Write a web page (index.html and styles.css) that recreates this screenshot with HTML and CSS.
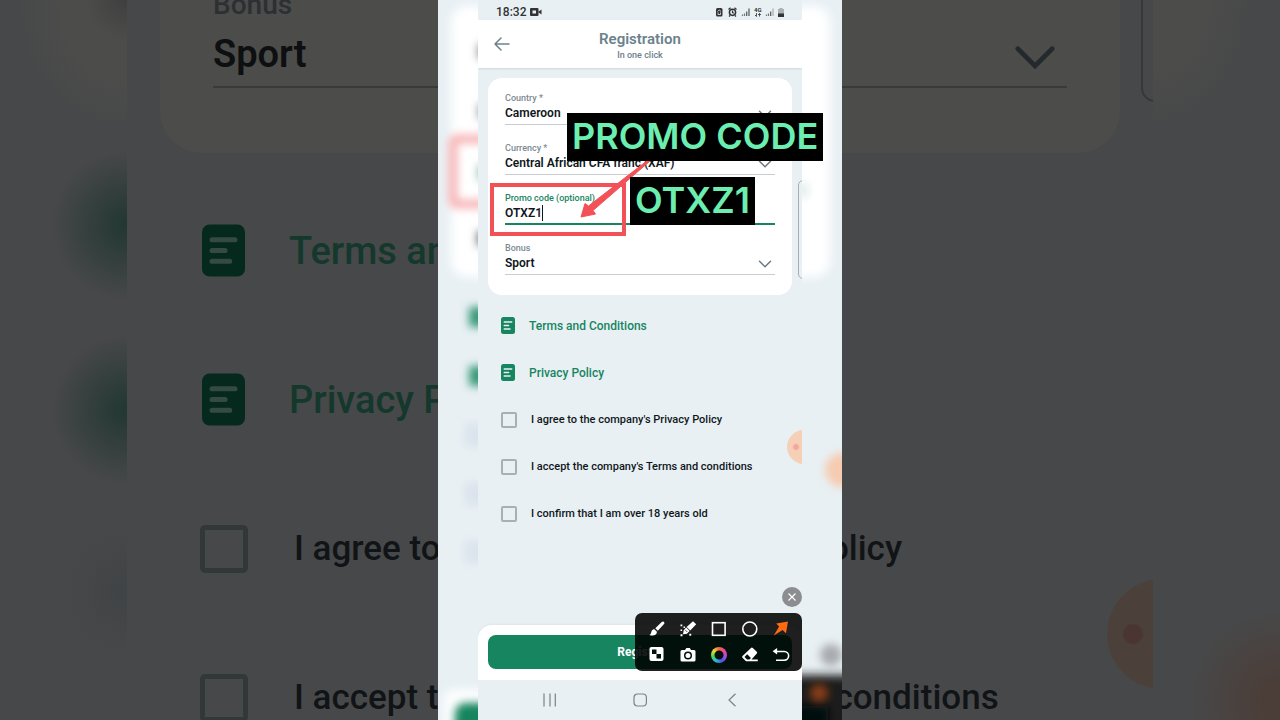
FILE: index.html
```
<!DOCTYPE html>
<html lang="en">
  <head>
    <meta charset="UTF-8" />
    <meta name="viewport" content="width=device-width, initial-scale=1.0" />
    <title>Registration</title>
    <link rel="stylesheet" href="styles.css" />
  </head>
  <body>
    <svg class="sprite" aria-hidden="true">
      <symbol id="doc" viewBox="0 0 14 17">
        <rect width="14" height="17" rx="2.5" fill="#17855f" />
        <path d="M3.3 5h7.4M3.3 8.500h4.200M3.300 12h5.700" stroke="#e8f0f4" stroke-width="1.600" stroke-linecap="round" />
      </symbol>
      <symbol id="doc-dark" viewBox="0 0 14 17">
        <rect width="14" height="17" rx="2.5" fill="#05291d" />
        <path d="M3.3 5h7.4M3.3 8.500h4.200M3.300 12h5.700" stroke="#354a43" stroke-width="1.700" stroke-linecap="round" />
      </symbol>
      <symbol id="chevron" viewBox="0 0 14 8">
        <path d="M1.500 1.200L7 6.700l5.500-5.500" fill="none" stroke="currentColor" stroke-width="1.500" stroke-linecap="round" />
      </symbol>
    </svg>

    <div class="stage">
      <!-- Enlarged, dimmed copy behind the phone -->
      <div class="backdrop">
        <div class="edge edge-left"></div>
        <div class="zoomed">
          <div class="zoomed-card">
            <div class="zoomed-label">Bonus</div>
            <div class="zoomed-value">Sport</div>
            <svg class="zoomed-chevron"><use href="#chevron" /></svg>
          </div>
          <div class="zoomed-list">
            <a class="zoomed-row zoomed-link" href="#terms"><svg><use href="#doc-dark" /></svg>Terms and Conditions</a>
            <a class="zoomed-row zoomed-link" href="#privacy"><svg><use href="#doc-dark" /></svg>Privacy Policy</a>
            <label class="zoomed-row"><input type="checkbox" />I agree to the company's Privacy Policy</label>
            <label class="zoomed-row"><input type="checkbox" />I accept the company's Terms and conditions</label>
          </div>
          <div class="zoomed-box"></div>
          <div class="zoomed-bubble"></div>
        </div>
        <div class="edge edge-right"></div>
      </div>

      <div class="frame">
        <svg class="glow" viewBox="0 0 404 720" width="404" height="720" aria-hidden="true">
          <defs>
            <filter id="soft" x="-50%" y="-50%" width="200%" height="200%"><feGaussianBlur stdDeviation="5" /></filter>
            <filter id="soft-sm" x="-50%" y="-50%" width="200%" height="200%"><feGaussianBlur stdDeviation="4" /></filter>
          </defs>
          <rect x="13" y="6" width="379" height="271" rx="16" fill="#fff" filter="url(#soft)" />
          <rect x="15" y="139" width="90" height="65" rx="3" fill="none" stroke="#f8b4b6" stroke-width="9" filter="url(#soft-sm)" />
          <g filter="url(#soft-sm)">
            <rect x="40" y="44" width="20" height="15" fill="#888" />
            <rect x="40" y="104" width="20" height="15" fill="#999fa3" />
            <rect x="40" y="165" width="20" height="15" fill="#8dbcab" />
            <rect x="39" y="231" width="20" height="15" fill="#777" />
            <rect x="31" y="307" width="24" height="20" fill="#3a9a79" />
            <rect x="31" y="366" width="24" height="20" fill="#3a9a79" />
            <rect x="27" y="424" width="24" height="22" fill="#dbe3ec" />
            <rect x="27" y="483" width="24" height="22" fill="#dbe3ec" />
            <rect x="27" y="541" width="24" height="22" fill="#dbe3ec" />
            <rect x="360" y="183" width="10" height="14" fill="#e0eaea" />
            <circle cx="404" cy="470" r="17" fill="#f6cbb0" />
            <circle cx="393" cy="655" r="11" fill="#a9abae" />
          </g>
          <rect x="6" y="690" width="70" height="50" rx="10" fill="#fff" filter="url(#soft)" />
          <rect x="17" y="703" width="60" height="40" rx="10" fill="#17855f" filter="url(#soft-sm)" />
          <rect x="340" y="675" width="90" height="70" fill="#1c1e1e" filter="url(#soft)" />
          <rect x="340" y="706" width="50" height="30" fill="#02110b" filter="url(#soft-sm)" />
          <circle cx="381" cy="693" r="9" fill="#8a3e12" filter="url(#soft-sm)" />
        </svg>

        <main class="phone">
          <div class="status-bar">
            <span class="clock">18:32</span>
            <svg width="12" height="8" viewBox="0 0 12 8">
              <rect width="8.500" height="8" rx="1" fill="#333" />
              <path d="M8 4l3.500-2.500v5z" fill="#333" />
              <rect x="2.500" y="2.500" width="3.500" height="3" fill="#e8f0f4" />
            </svg>
            <svg class="status-icons" width="70" height="12" viewBox="0 0 70 12">
              <rect x="0" y="2" width="6.500" height="8.500" rx="1.500" fill="#333" />
              <path d="M1.500 5.500L3.300 4l1.800 1.500M2 6.500v2h2.500v-2" fill="none" stroke="#e8f0f4" stroke-width=".8" />
              <circle cx="16.500" cy="6.300" r="3.100" fill="#e8f0f4" stroke="#333" stroke-width="1.500" />
              <path d="M12.500 3.500l2-1.700M20.500 3.500l-2-1.700M16.500 4.600v2l1.300.7M14 9.500l-1 1M19 9.500l1 1" fill="none" stroke="#333" stroke-width="1.200" />
              <path d="M26.500 10V8.500M28.500 10V7.500" stroke="#777" stroke-width="1.200" />
              <path d="M30.700 10V5.500M33 10V2.500" stroke="#555" stroke-width="1.200" />
              <text x="38" y="5.500" class="net">4G</text>
              <path d="M40.500 7v3.500m-1.500-1.500l1.500 1.500M43.500 10.500V7m-1.500 1.500h3" stroke="#444" fill="none" stroke-width=".9" />
              <path d="M50.500 10V8.500M52.500 10V7.500" stroke="#777" stroke-width="1.200" />
              <path d="M54.700 10V5.500" stroke="#555" stroke-width="1.200" />
              <path d="M57 10V2.500" stroke="#aaa" stroke-width="1.200" />
              <path d="M62 3h1.500V2h3v1H68v8h-6z" fill="#aab0b3" />
              <path d="M62 7.500h6V11h-6z" fill="#333" />
            </svg>
          </div>

          <header class="top-bar">
            <button class="back" aria-label="Back">
              <svg width="16" height="14" viewBox="0 0 16 14" fill="none" stroke="#6b828d" stroke-width="1.500" stroke-linecap="round" stroke-linejoin="round">
                <path d="M7 1L1 7l6 6M1 7h14" />
              </svg>
            </button>
            <h1>Registration</h1>
            <p>In one click</p>
          </header>

          <form class="form" id="form">
            <div class="card">
              <div class="field">
                <label for="country">Country *</label>
                <select id="country"><option>Cameroon</option></select>
                <svg class="chevron"><use href="#chevron" /></svg>
              </div>
              <div class="field">
                <label for="currency">Currency *</label>
                <select id="currency"><option>Central African CFA franc (XAF)</option></select>
                <svg class="chevron"><use href="#chevron" /></svg>
              </div>
              <div class="field active">
                <label for="promo">Promo code (optional)</label>
                <input type="text" id="promo" value="OTXZ1" />
                <span class="caret"></span>
              </div>
              <div class="field">
                <label for="bonus">Bonus</label>
                <select id="bonus"><option>Sport</option></select>
                <svg class="chevron"><use href="#chevron" /></svg>
              </div>
            </div>

            <div class="rows">
              <a class="row link" href="#terms"><svg><use href="#doc" /></svg>Terms and Conditions</a>
              <a class="row link" href="#privacy"><svg><use href="#doc" /></svg>Privacy Policy</a>
              <label class="row"><input type="checkbox" />I agree to the company's Privacy Policy</label>
              <label class="row"><input type="checkbox" />I accept the company's Terms and conditions</label>
              <label class="row"><input type="checkbox" />I confirm that I am over 18 years old</label>
            </div>
          </form>

          <div class="next-box"></div>
          <div class="bubble"></div>

          <footer class="submit-bar">
            <button class="register" type="submit" form="form">Register</button>
          </footer>

          <nav class="nav-bar">
            <button aria-label="Recent apps">
              <svg width="14" height="14" viewBox="0 0 14 14" stroke="#7c8387" stroke-width="1.200"><path d="M2 .5v13M8 .5v13M13.300 .5v13" /></svg>
            </button>
            <button aria-label="Home">
              <svg width="14" height="14" viewBox="0 0 14 14" fill="none" stroke="#7c8387" stroke-width="1.200"><rect x="1" y="1" width="12.400" height="12" rx="3.500" /></svg>
            </button>
            <button aria-label="Back">
              <svg width="14" height="14" viewBox="0 0 14 14" fill="none" stroke="#7c8387" stroke-width="1.200"><path d="M11.500.8L5 7l6.500 6.200" /></svg>
            </button>
          </nav>
        </main>

        <!-- Annotations drawn over the phone -->
        <div class="mark-box"></div>
        <svg class="mark-arrow" width="72" height="60" viewBox="0 0 72 60">
          <path d="M71 1L14 50.500l2.500 3.500L2 57l4-13.500 3.500 2.500L69 0z" fill="#f25257" stroke="#f25257" stroke-linejoin="round" />
        </svg>
        <div class="tag tag-title">PROMO CODE</div>
        <div class="tag tag-code">OTXZ1</div>

        <div class="tools">
          <button class="tools-close" aria-label="Close">
            <svg width="20" height="20" viewBox="0 0 20 20" stroke="#fff" stroke-width="1.200"><path d="M6.500 6.500l7 7M13.500 6.500l-7 7" /></svg>
          </button>
          <div class="tools-panel">
            <button aria-label="Brush">
              <svg viewBox="0 0 18 18" fill="#fff"><path d="M15.800 1.900c.9.800.8 1.400 0 2.300L9.800 10.800 7.300 8.300l6.400-6.200c.7-.7 1.400-.9 2.100-.2zM6.400 9.200l2.500 2.500c.3 3-3.200 4.900-7.500 3.300 1.900-.9 1.500-2.600 2.200-4.100.6-1.200 1.600-1.700 2.800-1.700z" /></svg>
            </button>
            <button aria-label="Highlighter">
              <svg viewBox="0 0 18 18" fill="#fff"><path d="M14 1.300l3.200 3-6 6.300-3.600-3.500zM7.200 7.600l3.400 3.400-2.700 2.700-3.900.6.700-4zM1.500 4.500h1.800v1.800H1.500zM4.500 6.500h1.600v1.600H4.500zM1.500 9.500h1.600v1.600H1.500zM1.500 14.300h2v2h-2zM10.300 13.800h1.900v1.900h-1.900z" /><path d="M6.600 10.300l1.500 1.500" stroke="#1e1e1e" /></svg>
            </button>
            <button aria-label="Rectangle">
              <svg viewBox="0 0 18 18" fill="none" stroke="#fff" stroke-width="1.600"><rect x="2.500" y="2.700" width="12.600" height="12.600" /></svg>
            </button>
            <button aria-label="Circle">
              <svg viewBox="0 0 18 18" fill="none" stroke="#fff" stroke-width="1.600"><circle cx="8.800" cy="9" r="7" /></svg>
            </button>
            <button aria-label="Arrow">
              <svg viewBox="0 0 18 18" fill="#ff6a13"><path d="M16 1.500L4.200 3.500l2.900 2.900L1.800 15.500l8.800-5.600 3.400 3.300z" /></svg>
            </button>
            <button aria-label="Mosaic">
              <svg viewBox="0 0 18 18"><rect x="1.500" y="1" width="14" height="14" rx="2" fill="#fff" /><path d="M4 3.500h4.500V8H4zM8.500 8H13v4.500H8.500z" fill="#02110b" /></svg>
            </button>
            <button aria-label="Screenshot">
              <svg viewBox="0 0 18 18"><path d="M3 4h3l1.400-2h3.400L12 4h3q1.500 0 1.500 1.500V14q0 1.500-1.500 1.500H3q-1.500 0-1.500-1.500V5.500Q1.500 4 3 4z" fill="#fff" /><circle cx="9" cy="9.500" r="4" fill="#02110b" /><circle cx="9" cy="9.500" r="2.500" fill="#fff" /></svg>
            </button>
            <button aria-label="Color"><span class="wheel"></span></button>
            <button aria-label="Eraser">
              <svg viewBox="0 0 18 18"><path d="M10 1.900q.9-.8 1.800 0l4 3.900q.8.900 0 1.800L10.500 13.500h6.300v1.700H5L1.500 11.700q-.8-.9 0-1.800z" fill="#fff" /><path d="M6.200 8.200L9.900 12 8.500 13.500H6L3.500 11z" fill="#02110b" /></svg>
            </button>
            <button aria-label="Undo">
              <svg viewBox="0 0 18 18"><path d="M3 5.500h9.300a4.200 4.200 0 010 8.700H4" fill="none" stroke="#fff" stroke-width="1.600" /><path d="M.6 5.300l4.500-3.300v6.600z" fill="#fff" /></svg>
            </button>
          </div>
        </div>
      </div>
    </div>
  </body>
</html>
```
FILE: styles.css
```
* {
  box-sizing: border-box;
}
body {
  font-family: Roboto, "Liberation Sans", sans-serif;
  background-color: #474849;
  color: #10171b;
  margin: 0;
}
button {
  font: inherit;
  padding: 0;
  border: none;
  background: none;
  cursor: pointer;
}
a {
  text-decoration: none;
}
svg {
  display: block;
  flex: none;
}
.sprite {
  position: absolute;
  width: 0;
  height: 0;
}
.stage {
  position: relative;
  display: flex;
  justify-content: center;
  min-height: 100vh;
  overflow: hidden;
}

/* Backdrop */
.backdrop {
  position: absolute;
  inset: 0;
  display: flex;
  overflow: hidden;
}
.edge {
  flex: 1;
}
.edge-left {
  background:
    radial-gradient(circle at 100% 225px, #243832 5px, transparent 75px),
    radial-gradient(circle at 100% 410px, #243832 5px, transparent 75px),
    radial-gradient(circle at 100% 592px, #414446 10px, transparent 65px),
    radial-gradient(circle at 100% 0, #403f3f, transparent 40px),
    radial-gradient(ellipse 110px 130px at 100% 0, #4c4c4b 60%, transparent);
}
.edge-right {
  background:
    radial-gradient(ellipse 100px 130px at 0 0, #4c4c4b 50%, transparent),
    radial-gradient(circle at 100% 700px, #4b3e39 20px, transparent 90px);
}
.zoomed {
  position: relative;
  width: 1026px;
  overflow: hidden;
  color: #111416;
}
.zoomed-card {
  position: relative;
  margin: -12px 33px 0;
  padding: 0 53px 65px;
  border-radius: 0 0 42px 42px;
  background: #4c4c4b;
}
.zoomed-label {
  font-size: 28px;
  font-weight: 500;
  line-height: 34px;
  color: #2b3033;
}
.zoomed-value {
  font-size: 38px;
  font-weight: 600;
  line-height: 64px;
  color: #0d0f10;
  border-bottom: 2px solid #383a3b;
}
.zoomed-chevron {
  position: absolute;
  top: 57px;
  right: 63px;
  width: 44px;
  height: 25px;
  color: #23292c;
}
.zoomed-list {
  margin-top: 23px;
  padding-left: 73px;
}
.zoomed-row {
  display: flex;
  align-items: center;
  gap: 46px;
  height: 149px;
  font-size: 35px;
  font-weight: 500;
}
.zoomed-row input {
  appearance: none;
  width: 48px;
  height: 48px;
  margin: 0;
  border: 5px solid #323739;
  border-radius: 5px;
}
.zoomed-link {
  gap: 44px;
  padding-left: 2px;
  font-size: 38px;
  color: #14382c;
}
.zoomed-link svg {
  width: 43px;
  height: 53px;
}
.zoomed-box {
  position: absolute;
  top: -20px;
  right: -20px;
  width: 32px;
  height: 122px;
  border: 2px solid #36393b;
  border-radius: 14px;
}
.zoomed-bubble {
  position: absolute;
  top: 579px;
  right: -64px;
  width: 110px;
  height: 110px;
  border-radius: 50%;
  background: radial-gradient(circle at 26px 55px, #4b3533 9px, #4b403a 11px);
}

/* Phone */
.frame {
  position: relative;
  width: 404px;
  padding: 0 40px;
  background: #e8f0f4;
}
.glow {
  position: absolute;
  top: 0;
  left: 0;
}
.phone {
  position: relative;
  display: flex;
  flex-direction: column;
  min-height: 100vh;
  overflow: hidden;
  background: #e8f0f4;
}
.status-bar {
  display: flex;
  align-items: center;
  gap: 4px;
  height: 20px;
  padding: 3px 16px 0 18px;
}
.clock {
  font-size: 12px;
  font-weight: 500;
  color: #333;
}
.status-icons {
  margin-left: auto;
}
.net {
  font-size: 6px;
  font-weight: 700;
  fill: #333;
}
.top-bar {
  position: relative;
  height: 48px;
  padding-top: 10px;
  text-align: center;
  background: #fff;
  box-shadow: 0 1px 2px #cfd7db;
  color: #6b828d;
}
.top-bar h1 {
  margin: 0;
  font-size: 15px;
  font-weight: 600;
  line-height: 18px;
}
.top-bar p {
  margin: 0;
  font-size: 9px;
  font-weight: 500;
  line-height: 14px;
}
.back {
  position: absolute;
  top: 17px;
  left: 16px;
}
.form {
  padding: 10px 10px 0;
}
.card {
  display: flex;
  flex-direction: column;
  gap: 17px;
  padding: 14px 17px 20px;
  border-radius: 14px;
  background: #fff;
}
.field {
  position: relative;
  height: 33px;
  border-bottom: 1px solid #c9cdcf;
}
.field label {
  display: block;
  font-size: 9px;
  font-weight: 500;
  line-height: 12px;
  color: #7b8a92;
}
.field select,
.field input {
  display: block;
  appearance: none;
  width: 100%;
  height: 18px;
  padding: 0;
  border: none;
  outline: none;
  background: none;
  font-family: inherit;
  font-size: 12px;
  font-weight: 600;
  color: #10171b;
}
.field.active {
  border-bottom: 2px solid #17855f;
}
.field.active label {
  color: #17855f;
}
.chevron {
  position: absolute;
  right: 3px;
  bottom: 6px;
  width: 14px;
  height: 8px;
  color: #6b7880;
}
.caret {
  position: absolute;
  top: 13px;
  left: 37px;
  width: 1px;
  height: 16px;
  background: #10171b;
}
.rows {
  margin-top: 7px;
  padding-left: 13px;
}
.row {
  display: flex;
  align-items: center;
  gap: 14px;
  height: 47px;
  font-size: 11px;
  font-weight: 500;
}
.row input {
  appearance: none;
  width: 16px;
  height: 16px;
  margin: 0;
  border: 2px solid #a9b0b4;
  border-radius: 2px;
}
.link {
  gap: 14px;
  font-size: 12px;
  color: #17855f;
}
.link svg {
  width: 14px;
  height: 17px;
}
.next-box {
  position: absolute;
  top: 180px;
  right: -20px;
  width: 24px;
  height: 99px;
  border: 1px solid #a4aeb4;
  border-radius: 5px;
}
.bubble {
  position: absolute;
  top: 430px;
  right: -19px;
  width: 34px;
  height: 34px;
  border-radius: 50%;
  background: radial-gradient(circle at 9px 17px, #f3a6a0 2px, #f6d0b6 4px);
}
.submit-bar {
  margin-top: auto;
  padding: 10px 10px 11px;
  border-radius: 14px 14px 0 0;
  background: #fff;
  box-shadow: 0 -1px 2px #dde5e9;
}
.register {
  display: block;
  width: 100%;
  height: 34px;
  border-radius: 8px;
  background: #17855f;
  color: #fff;
  font-size: 12px;
  font-weight: 700;
}
.nav-bar {
  display: flex;
  justify-content: center;
  gap: 77px;
  height: 40px;
}

/* Annotations */
.mark-box {
  position: absolute;
  top: 183px;
  left: 52px;
  width: 136px;
  height: 53px;
  border: 4px solid #f25257;
}
.mark-arrow {
  position: absolute;
  top: 160px;
  left: 141px;
}
.tag {
  position: absolute;
  padding: 0 5px 2px;
  background: #000;
  color: #6ceeb0;
  font-family: Inter, sans-serif;
  font-size: 36px;
  font-weight: 600;
  line-height: 46px;
  white-space: nowrap;
}
.tag-title {
  top: 113px;
  left: 129px;
}
.tag-code {
  top: 177px;
  left: 192px;
}
.tools {
  position: absolute;
  right: 40px;
  bottom: 49px;
  display: flex;
  flex-direction: column;
  align-items: flex-end;
  gap: 6px;
}
.tools-close {
  border-radius: 50%;
  background: #8b8d90;
}
.tools-panel {
  display: grid;
  grid-template-columns: repeat(5, 31px);
  grid-auto-rows: 26px;
  padding: 3px 6px;
  border-radius: 7px;
  background: rgba(0, 0, 0, 0.88);
}
.tools-panel button {
  display: grid;
  place-items: center;
}
.tools-panel svg {
  width: 18px;
  height: 18px;
}
.wheel {
  width: 16px;
  height: 16px;
  border-radius: 50%;
  background:
    radial-gradient(circle, #02110b 4px, transparent 5px),
    conic-gradient(#f2683c, #e8459a, #b04be0, #4a52e8, #2fb5d8, #4fd45a, #e8d83c, #f2683c);
}
```
